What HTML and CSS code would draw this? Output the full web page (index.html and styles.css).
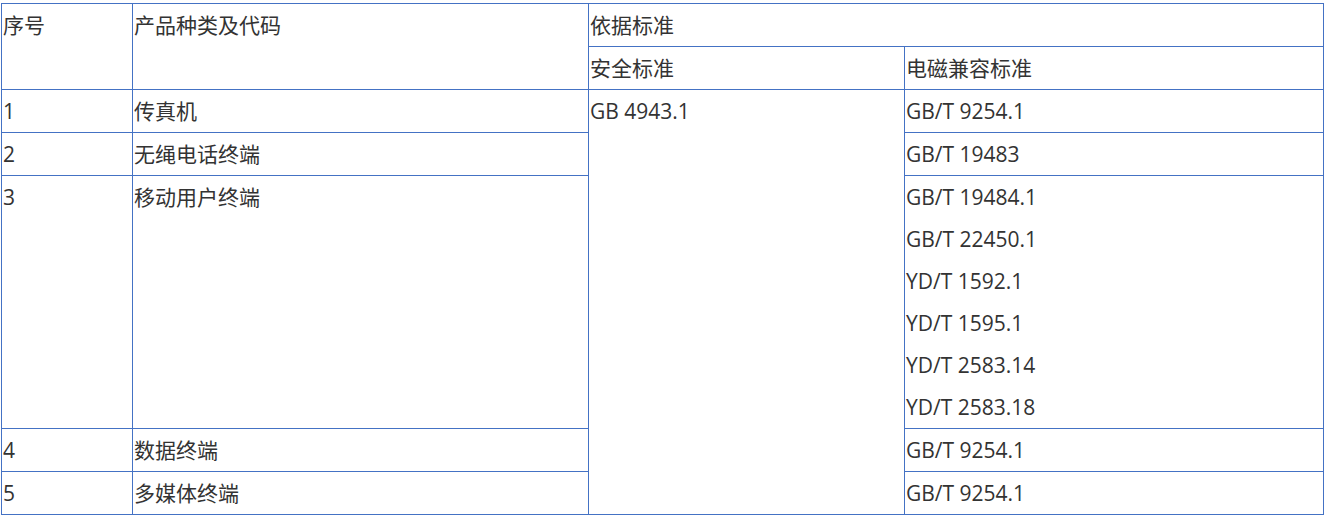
FILE: index.html
```html
<!DOCTYPE html>
<html lang="zh-CN">
<head>
<meta charset="utf-8">
<title>标准表</title>
<link rel="stylesheet" href="styles.css">
</head>
<body>
<table class="std-table">
  <colgroup>
    <col class="c1">
    <col class="c2">
    <col class="c3">
    <col class="c4">
  </colgroup>
  <tr>
    <td rowspan="2">序号</td>
    <td rowspan="2">产品种类及代码</td>
    <td colspan="2">依据标准</td>
  </tr>
  <tr>
    <td>安全标准</td>
    <td>电磁兼容标准</td>
  </tr>
  <tr>
    <td>1</td>
    <td>传真机</td>
    <td rowspan="5">GB 4943.1</td>
    <td>GB/T 9254.1</td>
  </tr>
  <tr>
    <td>2</td>
    <td>无绳电话终端</td>
    <td>GB/T 19483</td>
  </tr>
  <tr>
    <td>3</td>
    <td>移动用户终端</td>
    <td>
      <div class="line">GB/T 19484.1</div>
      <div class="line">GB/T 22450.1</div>
      <div class="line">YD/T 1592.1</div>
      <div class="line">YD/T 1595.1</div>
      <div class="line">YD/T 2583.14</div>
      <div class="line">YD/T 2583.18</div>
    </td>
  </tr>
  <tr>
    <td>4</td>
    <td>数据终端</td>
    <td>GB/T 9254.1</td>
  </tr>
  <tr>
    <td>5</td>
    <td>多媒体终端</td>
    <td>GB/T 9254.1</td>
  </tr>
</table>
</body>
</html>
```

FILE: styles.css
```css
html, body {
  margin: 0;
  padding: 0;
  background: #ffffff;
}

body {
  padding: 3px 0 0 1px;
  font-family: "Open Sans", "Noto Sans CJK SC", sans-serif;
  font-size: 21px;
  color: #333333;
}

.std-table {
  border-collapse: collapse;
  table-layout: fixed;
  width: 1323px;
}

.c1 { width: 131px; }
.c2 { width: 456px; }
.c3 { width: 316px; }
.c4 { width: 419px; }

.std-table td {
  border: 1px solid #4472c4;
  padding: 0 1px;
  height: 42px;
  line-height: 42px;
  vertical-align: top;
  text-align: left;
  white-space: nowrap;
}

.line {
  height: 42px;
  line-height: 42px;
}
```
